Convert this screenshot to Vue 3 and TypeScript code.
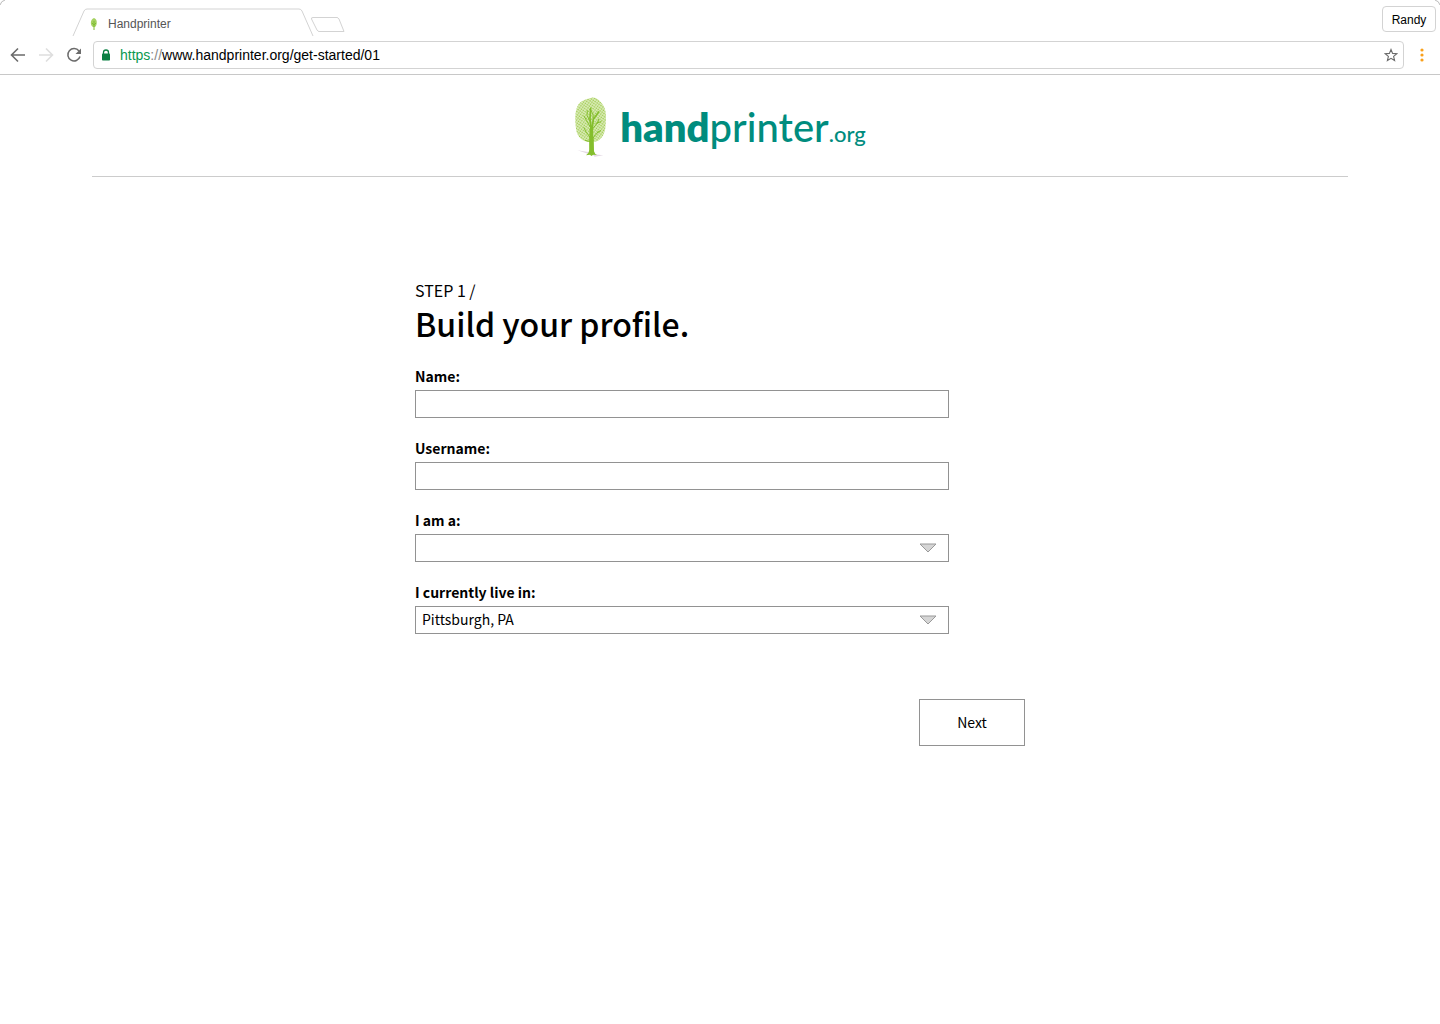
<script setup lang="ts">
import { ref } from 'vue'

const url = ref({ scheme: 'https', separator: '://', rest: 'www.handprinter.org/get-started/01' })
const name = ref('')
const username = ref('')
const role = ref('')
const city = ref('Pittsburgh, PA')
</script>

<template>
  <div class="window">
    <div class="browser">
      <svg class="corner left" viewBox="0 0 6 6" aria-hidden="true"><path d="M0 5Q1 1 5 0" /></svg>
      <svg class="corner right" viewBox="0 0 6 6" aria-hidden="true"><path d="M1 0Q5 1 6 5" /></svg>
      <div class="tabs">
        <div class="tab">
          <svg class="tab-shape" viewBox="0 0 242 28" aria-hidden="true">
            <path d="M1 28L12 3Q13 1 15 1H227Q229 1 230 3L241 28" />
          </svg>
          <svg class="favicon" viewBox="0 0 8 14" aria-hidden="true">
            <path d="M4 1C8 2 7 9 5 10H3C0 9 0 2 4 1Z" fill="#a5d161" />
            <path d="M4 4V13M2 6L4 8L6 6" fill="none" stroke="#80bd35" />
          </svg>
          <span class="tab-title">Handprinter</span>
        </div>
        <button class="new-tab" type="button" aria-label="New tab">
          <svg viewBox="0 0 36 18" width="36" height="18">
            <path d="M3 1.500H27Q28 1.500 29 3L34 15.500H9Q8 15.500 7 14L1.500 3Q1 1.500 3 1.500Z" fill="none" stroke="#d3d3d3" />
          </svg>
        </button>
        <button class="profile" type="button">Randy</button>
      </div>
      <div class="toolbar">
        <button class="icon" type="button" aria-label="Back">
          <svg viewBox="0 0 16 16"><path d="M15 8H2M8 1.500L1.500 8L8 14.500" fill="none" stroke="#6b6b6b" stroke-width="1.600" /></svg>
        </button>
        <button class="icon" type="button" aria-label="Forward" disabled>
          <svg viewBox="0 0 16 16"><path d="M1 8H14M8 1.500L14.500 8L8 14.500" fill="none" stroke="#dedede" stroke-width="1.600" /></svg>
        </button>
        <button class="icon" type="button" aria-label="Reload">
          <svg viewBox="0 0 16 16">
            <path d="M13 4A6.200 6.200 0 1 0 14 9.500" fill="none" stroke="#6b6b6b" stroke-width="1.500" />
            <path d="M15 1.500V7H9.500Z" fill="#6b6b6b" />
          </svg>
        </button>
        <div class="address">
          <svg class="lock" viewBox="0 0 10 12" aria-hidden="true">
            <path d="M2.500 5V3.500A2.500 2.500 0 0 1 7.500 3.500V5" fill="none" stroke="#0b8043" stroke-width="1.300" />
            <rect x="1" y="4.500" width="8" height="7" rx=".8" fill="#0b8043" />
          </svg>
          <span class="url"><span class="scheme">{{ url.scheme }}</span><span class="separator">{{ url.separator }}</span>{{ url.rest }}</span>
          <button class="star" type="button" aria-label="Bookmark this page">
            <svg viewBox="0 0 14 14">
              <path d="M7 1.500L8.600 5.400L12.800 5.700L9.600 8.400L10.600 12.500L7 10.300L3.400 12.500L4.400 8.400L1.200 5.700L5.400 5.400Z" fill="none" stroke="#6b6b6b" stroke-width="1.100" />
            </svg>
          </button>
        </div>
        <button class="menu" type="button" aria-label="Menu">
          <svg viewBox="0 0 4 14"><g fill="#f9a01b"><circle cx="2" cy="2" r="1.600" /><circle cx="2" cy="7" r="1.600" /><circle cx="2" cy="12" r="1.600" /></g></svg>
        </button>
      </div>
    </div>

    <header class="site-header">
      <a class="brand" href="#">
        <svg class="tree" viewBox="18 0 132 216" aria-hidden="true">
          <defs>
            <pattern id="ridges" width="7" height="7" patternUnits="userSpaceOnUse" patternTransform="rotate(35)">
              <rect width="7" height="7" fill="#dcedba" />
              <circle cx="3" cy="3" r="2.500" fill="#a0cb52" />
            </pattern>
          </defs>
          <path d="M28 181L66 187L60 191ZM72 192L106 196L80 200Z" fill="#e3d9e3" />
          <path d="M70 23C82 19 95 30 103 42C118 60 114 90 112 115C109 140 92 158 75 155C50 160 30 145 25 122C20 90 20 60 32 42C44 28 58 27 70 23Z" fill="url(#ridges)" />
          <g fill="none" stroke="#84be2c" stroke-linecap="round">
            <path d="M70 182V118" stroke-width="11" />
            <path d="M70 122L66 85L68 55M72 118L76 88L92 66" stroke-width="5" />
            <path d="M69 115L56 92L48 78M75 115L88 99L92 88M68 98L57 76L58 62M76 95L75 72L66 58M74 145L91 125M69 145L54 126L48 113M70 156L52 151M84 100L99 95M88 128L98 122" stroke-width="3" />
          </g>
          <path d="M64 140H77L78 184Q80 192 87 195L76 194L70 198L66 194L54 196Q63 190 64 180Z" fill="#84be2c" />
        </svg>
        <span class="wordmark"><b>hand</b>printer<small>.org</small></span>
      </a>
    </header>

    <main class="step">
      <p class="step-count">STEP 1 /</p>
      <h1>Build your profile.</h1>
      <form @submit.prevent>
        <div class="fields">
          <div class="field">
            <label for="name">Name:</label>
            <input id="name" v-model="name" type="text" />
          </div>
          <div class="field">
            <label for="username">Username:</label>
            <input id="username" v-model="username" type="text" />
          </div>
          <div class="field">
            <label for="role">I am a:</label>
            <div class="select">
              <select id="role" v-model="role">
                <option value=""></option>
              </select>
              <svg class="arrow" viewBox="0 0 18 10" aria-hidden="true"><path d="M1 1H17L9 9Z" /></svg>
            </div>
          </div>
          <div class="field">
            <label for="city">I currently live in:</label>
            <div class="select">
              <select id="city" v-model="city">
                <option>Pittsburgh, PA</option>
              </select>
              <svg class="arrow" viewBox="0 0 18 10" aria-hidden="true"><path d="M1 1H17L9 9Z" /></svg>
            </div>
          </div>
        </div>
        <button class="next" type="submit">Next</button>
      </form>
    </main>
  </div>
</template>

<style>
body {
  margin: 0;
  background: #fff;
}
</style>

<style scoped>
* {
  box-sizing: border-box;
}

.window {
  color: #000;
  font-family: "Noto Sans CJK SC", "Noto Sans", sans-serif;
}

button {
  padding: 0;
  border: 0;
  background: none;
  color: inherit;
  font: inherit;
}

svg {
  display: block;
}

.browser {
  position: relative;
  border-bottom: 1px solid #c8c8c8;
  font-family: "Liberation Sans", Arial, sans-serif;
}

.corner {
  position: absolute;
  top: 0;
  width: 6px;
  height: 6px;
  fill: none;
  stroke: #bbb;
}

.corner.left {
  left: 0;
}

.corner.right {
  right: 0;
}

.tabs {
  display: flex;
  height: 36px;
  padding: 0 4px 0 72px;
}

.tab {
  position: relative;
  display: flex;
  align-items: center;
  gap: 10px;
  width: 242px;
  height: 28px;
  margin-top: 8px;
  padding: 4px 18px 0;
}

.tab-shape {
  position: absolute;
  inset: 0;
  width: 242px;
  height: 28px;
  fill: none;
  stroke: #d3d3d3;
}

.favicon {
  width: 8px;
  height: 14px;
}

.tab-title {
  color: #555;
  font-size: 12px;
  line-height: 16px;
}

.new-tab {
  height: 18px;
  margin: 16px 0 0 -4px;
}

.profile {
  width: 54px;
  height: 26px;
  margin: 6px 0 0 auto;
  padding-top: 2px;
  border: 1px solid #d3d3d3;
  border-radius: 4px;
  font-size: 12px;
}

.toolbar {
  display: flex;
  align-items: center;
  gap: 12px;
  height: 38px;
  padding: 0 16px 0 10px;
}

.icon,
.icon svg {
  width: 16px;
  height: 16px;
}

.address {
  display: flex;
  flex: 1;
  align-items: center;
  gap: 9px;
  height: 28px;
  margin: 0 4px 0 -1px;
  padding: 0 5px 0 7px;
  border: 1px solid #d3d3d3;
  border-radius: 4px;
}

.lock {
  width: 10px;
  height: 12px;
}

.url {
  flex: 1;
  font-size: 14px;
  line-height: 20px;
}

.scheme {
  color: #0b9950;
}

.separator {
  color: #888;
}

.star,
.star svg {
  width: 14px;
  height: 14px;
}

.menu,
.menu svg {
  width: 4px;
  height: 14px;
}

.site-header {
  display: flex;
  justify-content: center;
  height: 102px;
  margin: 0 92px;
  padding-top: 15px;
  border-bottom: 1px solid #ccc;
}

.brand {
  display: flex;
  gap: 2px;
  height: 72px;
  color: #008c7e;
  text-decoration: none;
}

.tree {
  width: 44px;
  height: 72px;
}

.wordmark {
  font-family: Lato, sans-serif;
  font-size: 40px;
  font-weight: 500;
  line-height: 74px;
}

.wordmark b {
  font-weight: 800;
}

.wordmark small {
  font-size: 22px;
}

.step {
  max-width: 610px;
  margin: 0 auto;
  padding: 100px 0 40px;
}

.step-count {
  margin: 0;
  font-size: 16px;
  line-height: 26px;
}

h1 {
  margin: 0;
  font-size: 32px;
  font-weight: 500;
  line-height: 40px;
}

form {
  display: flex;
  flex-direction: column;
  margin-top: 21px;
}

.fields {
  display: grid;
  gap: 18px;
  width: 534px;
  max-width: 100%;
}

.field {
  display: grid;
  gap: 2px;
}

label {
  font-size: 14px;
  font-weight: 700;
  line-height: 24px;
}

input,
select {
  width: 100%;
  height: 28px;
  margin: 0;
  padding: 0 6px 2px;
  border: 1px solid #929292;
  border-radius: 0;
  background: #fff;
  color: inherit;
  font: 14px/24px "Noto Sans CJK SC", "Noto Sans", sans-serif;
}

select {
  appearance: none;
}

.select {
  position: relative;
}

.arrow {
  position: absolute;
  top: 9px;
  right: 12px;
  width: 18px;
  height: 10px;
  fill: #d5d5d5;
  stroke: #999;
  pointer-events: none;
}

.next {
  align-self: flex-end;
  width: 106px;
  height: 47px;
  margin-top: 65px;
  padding-bottom: 2px;
  border: 1px solid #929292;
  font-size: 14px;
}
</style>
